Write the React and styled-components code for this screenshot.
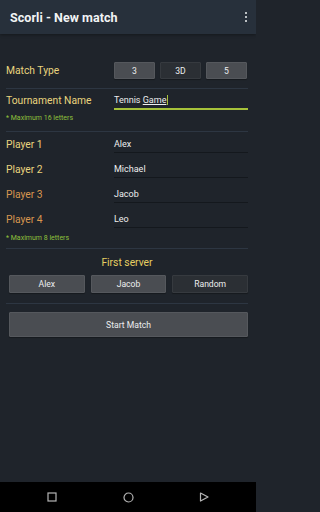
import styled, { createGlobalStyle } from "styled-components"

const GlobalStyle = createGlobalStyle`
   html, body { margin: 0; padding: 0; background: #1f242b; }
   * { box-sizing: border-box; }
   body { font-family: Roboto, "Noto Sans", sans-serif; }
`

const Screen = styled.div`
   width: 256px;
   height: 512px;
   display: flex;
   flex-direction: column;
   background: #1f242b;
   overflow: hidden;
`

const AppBar = styled.header`
   height: 34px;
   flex-shrink: 0;
   display: flex;
   align-items: center;
   justify-content: space-between;
   padding: 0 10px 0 10px;
   background: #27303b;
   box-shadow: 0 1px 3px rgba(0, 0, 0, 0.35);
`

const Title = styled.h1`
   margin: 0;
   font-size: 12.5px;
   font-weight: 700;
   color: #f2f4f5;
   letter-spacing: 0.05px;
`

const Dots = styled.div`
   display: flex;
   flex-direction: column;
   gap: 1.5px;
   margin-right: -1px;
   span {
      width: 2.5px;
      height: 2.5px;
      border-radius: 50%;
      background: #eef0f2;
   }
`

const Content = styled.main`
   flex: 1;
   display: flex;
   flex-direction: column;
   padding: 28px 8px 0 6px;
`

const Row = styled.div`
   display: grid;
   grid-template-columns: 108px 1fr;
   align-items: center;
   height: ${p => p.h || 18}px;
   margin-top: ${p => p.mt || 0}px;
`

const Label = styled.span`
   font-size: 10.3px;
   color: ${p => (p.orange ? "#d8964f" : "#e9d47e")};
`

const Segments = styled.div`
   display: grid;
   grid-template-columns: repeat(3, 1fr);
   gap: 5px;
   height: 100%;
   margin-right: 1px;
`

const Btn = styled.div`
   display: flex;
   align-items: center;
   justify-content: center;
   font-size: 8.6px;
   color: #eceeef;
   background: ${p => (p.dark ? "#2b2f34" : "#4a4d52")};
   border: 1px solid ${p => (p.dark ? "#363a3f" : "#55585d")};
   border-radius: 1px;
   box-shadow: 0 1px 1px rgba(0, 0, 0, 0.3);
`

const Divider = styled.div`
   height: 1px;
   background: #2d3642;
   margin-top: ${p => p.mt || 0}px;
`

const Field = styled.div`
   height: 100%;
   display: flex;
   align-items: center;
   padding-top: 1px;
   font-size: 9px;
   color: #eeeeee;
   border-bottom: ${p => (p.active ? "2px solid #a6c23a" : "1px solid #14181d")};
`

const Marked = styled.span`
   text-decoration: underline;
   text-underline-offset: 1px;
`

const Caret = styled.span`
   display: inline-block;
   width: 1px;
   height: 10px;
   background: #a6c23a;
   margin-left: 0.5px;
`

const Hint = styled.div`
   font-size: 7px;
   line-height: 10px;
   color: #8fc03c;
   margin-top: ${p => p.mt || 0}px;
`

const Heading = styled.div`
   text-align: center;
   font-size: 10.3px;
   line-height: 12px;
   color: #e6cf62;
   margin-top: 8px;
`

const ButtonRow = styled.div`
   display: grid;
   grid-template-columns: repeat(3, 1fr);
   gap: 6px;
   height: 18px;
   margin: 6px 0 0 3px;
`

const WideBtn = styled(Btn)`
   height: 25px;
   margin: 8px 0 0 3px;
`

const NavBar = styled.nav`
   height: 30px;
   flex-shrink: 0;
   background: #000;
   display: grid;
   grid-template-columns: repeat(3, 1fr);
   place-items: center;
   padding: 0 14px;
`

const players = [
   { label: "Player 1", name: "Alex" },
   { label: "Player 2", name: "Michael" },
   { label: "Player 3", name: "Jacob", orange: true },
   { label: "Player 4", name: "Leo", orange: true },
]

export default function App() {
   return (
      <Screen>
         <GlobalStyle />
         <AppBar>
            <Title>Scorli - New match</Title>
            <Dots>
               <span />
               <span />
               <span />
            </Dots>
         </AppBar>

         <Content>
            <Row h={17}>
               <Label>Match Type</Label>
               <Segments>
                  <Btn>3</Btn>
                  <Btn dark>3D</Btn>
                  <Btn>5</Btn>
               </Segments>
            </Row>
            <Divider mt={9} />

            <Row h={19} mt={2}>
               <Label>Tournament Name</Label>
               <Field active>
                  Tennis&nbsp;<Marked>Game</Marked>
                  <Caret />
               </Field>
            </Row>
            <Hint mt={3}>* Maximum 16 letters</Hint>
            <Divider mt={8} />

            {players.map((p, i) => (
               <Row key={p.label} mt={i === 0 ? 3 : 7}>
                  <Label orange={p.orange}>{p.label}</Label>
                  <Field>{p.name}</Field>
               </Row>
            ))}
            <Hint mt={5}>* Maximum 8 letters</Hint>
            <Divider mt={5} />

            <Heading>First server</Heading>
            <ButtonRow>
               <Btn>Alex</Btn>
               <Btn>Jacob</Btn>
               <Btn dark>Random</Btn>
            </ButtonRow>
            <Divider mt={10} />

            <WideBtn>Start Match</WideBtn>
         </Content>

         <NavBar>
            <svg width="10" height="10" viewBox="0 0 10 10">
               <rect x="1" y="1" width="8" height="8" fill="none" stroke="#b5b5b5" strokeWidth="1.2" />
            </svg>
            <svg width="11" height="11" viewBox="0 0 11 11">
               <circle cx="5.5" cy="5.5" r="4.5" fill="none" stroke="#b5b5b5" strokeWidth="1.2" />
            </svg>
            <svg width="10" height="10" viewBox="0 0 10 10">
               <path d="M1.5 1 L9 5 L1.5 9 Z" fill="none" stroke="#b5b5b5" strokeWidth="1.2" strokeLinejoin="round" />
            </svg>
         </NavBar>
      </Screen>
   )
}
